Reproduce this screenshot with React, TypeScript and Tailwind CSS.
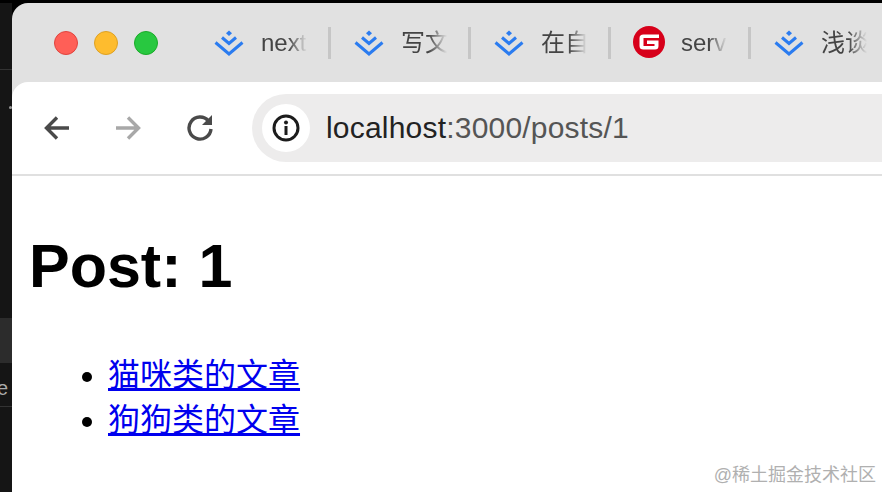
const tabs = [
  { title: "next", logo: "juejin" },
  { title: "写文", logo: "juejin" },
  { title: "在自", logo: "juejin" },
  { title: "serv", logo: "gitee" },
  { title: "浅谈", logo: "juejin" },
];

function JuejinLogo() {
  return (
    <svg width="32" height="28" viewBox="0 0 32 28" fill="none" className="shrink-0">
      <path d="M16 1.5 L19 4.2 L16 7 L13 4.2 Z" fill="#2b7cf0" />
      <path d="M9 8.5 L16 14.5 L23 8.5" stroke="#2b7cf0" strokeWidth="3" />
      <path d="M2.5 13.5 L16 25 L29.5 13.5" stroke="#2b7cf0" strokeWidth="3" />
    </svg>
  );
}

function GiteeLogo() {
  return (
    <svg width="32" height="32" viewBox="0 0 32 32" className="mt-[-2px] shrink-0">
      <circle cx="16" cy="16" r="16" fill="#d7001a" />
      <path
        d="M26 8.5 H10.5 Q6.5 8.5 6.5 12 V20 Q6.5 23.5 10.5 23.5 H22 Q25.5 23.5 25.5 20 V14.5 H14 V18 H21.5 V20 H10.5 V12 H26 Z"
        fill="#fff"
      />
    </svg>
  );
}

export default function App() {
  return (
    <div className="h-[492px] w-[882px] overflow-hidden bg-black font-['Liberation_Sans','Noto_Sans_CJK_SC',sans-serif]">
      <div className="flex h-full pt-[3px]">
        {/* bit of the editor window behind the browser */}
        <div className="relative w-3 shrink-0 bg-[#151515]">
          <div className="h-[67px] border-b border-[#333]" />
          <div className="absolute left-[9px] top-[103px] h-[3px] w-[3px] rounded-full bg-[#999]" />
          <div className="absolute left-0 top-[315px] h-[45px] w-3 bg-[#2c2c2c]" />
          <div className="absolute left-0 top-[375px] w-3 overflow-hidden text-[20px] leading-5 text-[#aaa]">
            <span className="ml-[-3px]">e</span>
          </div>
          <div className="absolute left-0 top-[403px] h-px w-3 bg-[#333]" />
        </div>

        <div className="flex min-w-0 flex-1 flex-col overflow-hidden rounded-tl-[16px] bg-[#e1e1e1]">
          {/* tab strip */}
          <div className="flex h-[79px] shrink-0 items-start pt-[22px]">
            <div className="flex w-[190px] shrink-0 items-center gap-4 pl-[42px] pt-[6px]">
              <div className="h-6 w-6 rounded-full border border-[#e0443e] bg-[#ff5f57]" />
              <div className="h-6 w-6 rounded-full border border-[#dea123] bg-[#febc2e]" />
              <div className="h-6 w-6 rounded-full border border-[#1aab29] bg-[#28c840]" />
            </div>
            <div className="flex">
              {tabs.map((tab, i) => (
                <div key={i} className="flex h-9 w-[140px] shrink-0 items-center">
                  <div className="flex w-[126px] items-center">
                    <div className="flex w-[59px] shrink-0 justify-start pl-[11px]">
                      {tab.logo === "juejin" ? <JuejinLogo /> : <GiteeLogo />}
                    </div>
                    <span className="w-[46px] overflow-hidden whitespace-nowrap text-[24px] leading-9 text-[#444] [mask-image:linear-gradient(to_right,#000_60%,transparent)]">
                      {tab.title}
                    </span>
                  </div>
                  <div className="h-[32px] w-[3px] bg-[#c6c6c6]" />
                </div>
              ))}
            </div>
          </div>

          {/* toolbar */}
          <div className="flex h-[94px] shrink-0 items-center gap-0 rounded-tl-[16px] border-b-2 border-[#e0e0e0] bg-white pb-[1px]">
            <div className="flex w-[240px] shrink-0 items-center pl-[32px]">
              <svg width="26" height="26" viewBox="0 0 26 26" fill="none" stroke="#4a4a4a" strokeWidth="3.4">
                <path d="M25 13 H3 M13 2.5 L2.5 13 L13 23.5" />
              </svg>
              <svg width="26" height="26" viewBox="0 0 26 26" fill="none" stroke="#a8a8a8" strokeWidth="3.4" className="ml-[45px]">
                <path d="M1 13 H23 M13 2.5 L23.5 13 L13 23.5" />
              </svg>
              <svg width="28" height="28" viewBox="0 0 28 28" fill="none" stroke="#4a4a4a" strokeWidth="3.4" className="ml-[45px]">
                <path d="M22.5 7 A11 11 0 1 0 25 15" />
                <path d="M26 1 V11 H16 Z" fill="#4a4a4a" stroke="none" />
              </svg>
            </div>
            <div className="flex h-[68px] flex-1 items-center rounded-l-[34px] bg-[#edecec] pl-[10px]">
              <div className="flex h-12 w-12 shrink-0 items-center justify-center rounded-full bg-white">
                <svg width="28" height="28" viewBox="0 0 28 28" fill="none">
                  <circle cx="14" cy="14" r="12" stroke="#1c1c1c" strokeWidth="3" />
                  <circle cx="14" cy="8.5" r="2" fill="#1c1c1c" />
                  <rect x="12.5" y="12" width="3" height="9" fill="#1c1c1c" />
                </svg>
              </div>
              <div className="ml-4 whitespace-nowrap text-[30px] leading-8 tracking-[0.2px] text-[#555]">
                <span className="text-[#222]">localhost</span>:3000/posts/1
              </div>
            </div>
          </div>

          {/* page */}
          <div className="relative flex-1 bg-white pl-[17px] text-black">
            <h1 className="mt-[50px] text-[61px] font-bold leading-[80px]">Post: 1</h1>
            <ul className="mt-[47px] list-disc pl-[79px] text-[32px] leading-[45px]">
              <li>
                <a href="#" className="text-[#0000ee] underline">猫咪类的文章</a>
              </li>
              <li>
                <a href="#" className="text-[#0000ee] underline">狗狗类的文章</a>
              </li>
            </ul>
            <div className="absolute bottom-[5px] right-[6px] text-[18px] leading-6 text-[#b0b0b0]">@稀土掘金技术社区</div>
          </div>
        </div>
      </div>
    </div>
  );
}
